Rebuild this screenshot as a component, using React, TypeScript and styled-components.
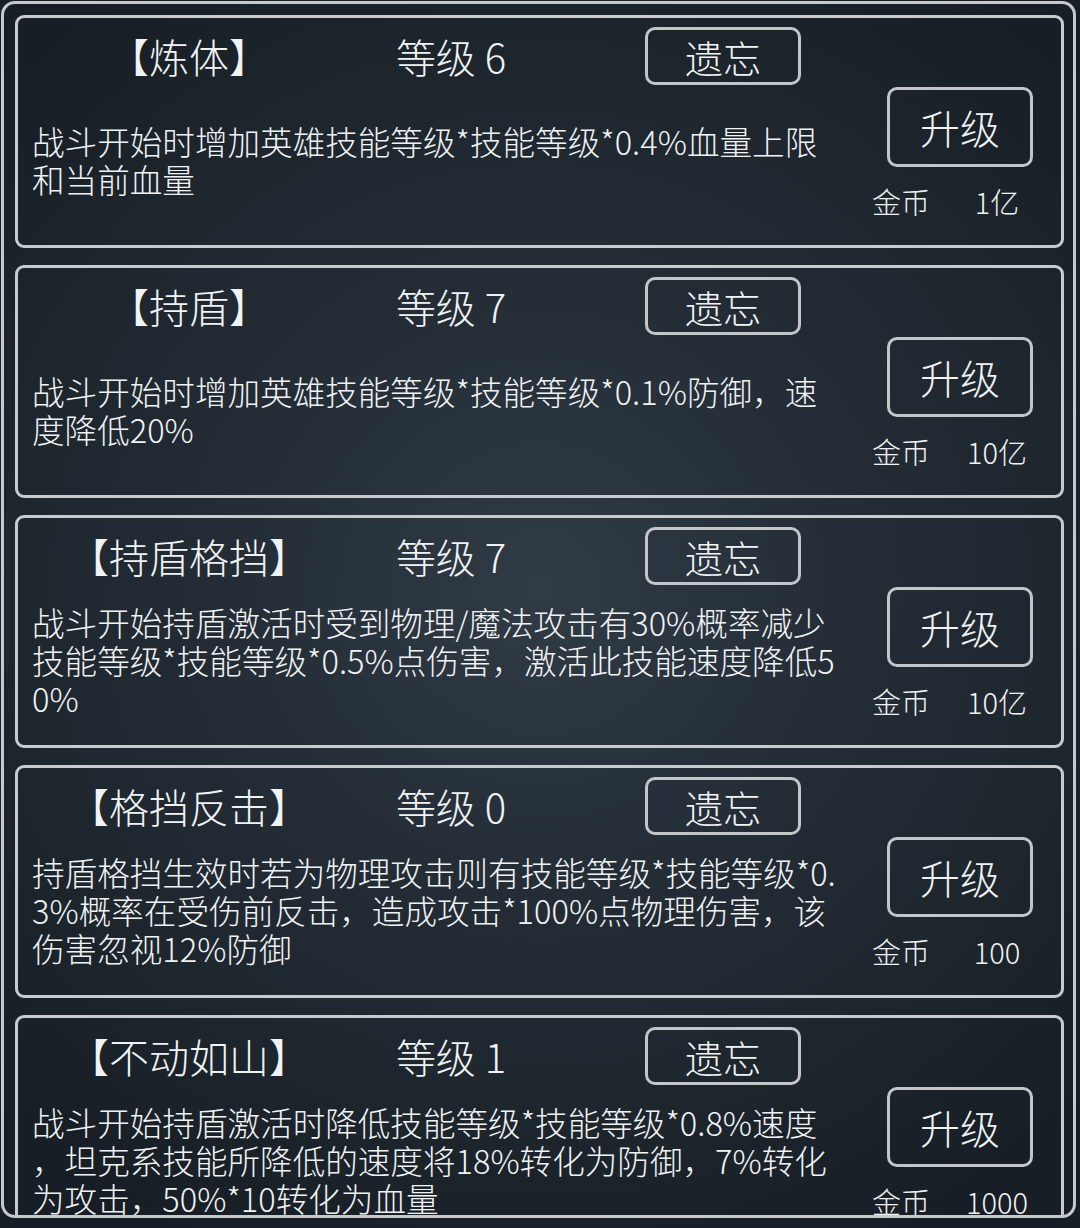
import React from "react";
import styled, { createGlobalStyle } from "styled-components";

const Global = createGlobalStyle`
  html, body {
    margin: 0;
    padding: 0;
    background: #161d24;
  }
  body {
    font-family: "Noto Sans CJK SC", "Noto Sans", sans-serif;
    font-weight: 300;
    color: #f1f2f3;
  }
`;

const Page = styled.div`
  width: 1080px;
  height: 1228px;
  box-sizing: border-box;
  padding: 1px 4px 10px 1px;
  background: radial-gradient(ellipse 70% 60% at 50% 48%, #303b46 0%, #232c35 45%, #171e25 100%);
`;

const Frame = styled.div`
  height: 1217px;
  box-sizing: border-box;
  border: 3px solid #c6c9cc;
  border-radius: 14px;
  overflow: hidden;
  padding: 11px 9px 0 11px;
  display: flex;
  flex-direction: column;
  gap: 17px;
`;

const Card = styled.div`
  flex: 0 0 233px;
  height: 233px;
  box-sizing: border-box;
  border: 3px solid #c8cbce;
  border-radius: 9px;
  display: flex;
  flex-direction: column;
`;

const Header = styled.div`
  display: flex;
  align-items: center;
  height: 58px;
  margin-top: 9px;
`;

const Title = styled.div`
  width: 342px;
  text-align: center;
  font-size: 40px;
  line-height: 58px;
  white-space: nowrap;
`;

const Level = styled.div`
  width: 182px;
  text-align: center;
  font-size: 40px;
  line-height: 58px;
  white-space: nowrap;
`;

const ForgetButton = styled.div`
  margin-left: 103px;
  width: 156px;
  height: 58px;
  box-sizing: border-box;
  border: 3px solid #c3c6c9;
  border-radius: 10px;
  display: flex;
  align-items: center;
  justify-content: center;
  font-size: 38px;
`;

const Body = styled.div`
  flex: 1;
  display: flex;
`;

const Desc = styled.div`
  flex: 1;
  display: flex;
  align-items: center;
  padding: 0 0 10px 14px;
  font-size: 32.6px;
  line-height: 38px;
  white-space: pre;
`;

const Side = styled.div`
  width: 201px;
  box-sizing: border-box;
  padding: 2px 28px 0 0;
  display: flex;
  flex-direction: column;
  align-items: flex-end;
`;

const UpgradeButton = styled.div`
  width: 146px;
  height: 80px;
  box-sizing: border-box;
  border: 3px solid #c3c6c9;
  border-radius: 10px;
  display: flex;
  align-items: center;
  justify-content: center;
  font-size: 40px;
`;

const PriceRow = styled.div`
  margin-top: 17px;
  margin-right: 1px;
  display: flex;
  align-items: center;
  font-size: 29px;
  line-height: 34px;
`;

const PriceLabel = styled.span`
  width: 60px;
  white-space: nowrap;
`;

const PriceValue = styled.span`
  margin-left: 30px;
  width: 70px;
  text-align: center;
  white-space: nowrap;
`;

type Skill = {
  name: string;
  level: number;
  desc: string;
  price: string;
};

const skills: Skill[] = [
  {
    name: "【炼体】",
    level: 6,
    desc: "战斗开始时增加英雄技能等级*技能等级*0.4%血量上限\n和当前血量",
    price: "1亿",
  },
  {
    name: "【持盾】",
    level: 7,
    desc: "战斗开始时增加英雄技能等级*技能等级*0.1%防御，速\n度降低20%",
    price: "10亿",
  },
  {
    name: "【持盾格挡】",
    level: 7,
    desc: "战斗开始持盾激活时受到物理/魔法攻击有30%概率减少\n技能等级*技能等级*0.5%点伤害，激活此技能速度降低5\n0%",
    price: "10亿",
  },
  {
    name: "【格挡反击】",
    level: 0,
    desc: "持盾格挡生效时若为物理攻击则有技能等级*技能等级*0.\n3%概率在受伤前反击，造成攻击*100%点物理伤害，该\n伤害忽视12%防御",
    price: "100",
  },
  {
    name: "【不动如山】",
    level: 1,
    desc: "战斗开始持盾激活时降低技能等级*技能等级*0.8%速度\n，坦克系技能所降低的速度将18%转化为防御，7%转化\n为攻击，50%*10转化为血量",
    price: "1000",
  },
];

function SkillCard({ skill }: { skill: Skill }) {
  return (
    <Card>
      <Header>
        <Title>{skill.name}</Title>
        <Level>等级 {skill.level}</Level>
        <ForgetButton>遗忘</ForgetButton>
      </Header>
      <Body>
        <Desc>{skill.desc}</Desc>
        <Side>
          <UpgradeButton>升级</UpgradeButton>
          <PriceRow>
            <PriceLabel>金币</PriceLabel>
            <PriceValue>{skill.price}</PriceValue>
          </PriceRow>
        </Side>
      </Body>
    </Card>
  );
}

export default function App() {
  return (
    <>
      <Global />
      <Page>
        <Frame>
          {skills.map((s) => (
            <SkillCard key={s.name} skill={s} />
          ))}
        </Frame>
      </Page>
    </>
  );
}
